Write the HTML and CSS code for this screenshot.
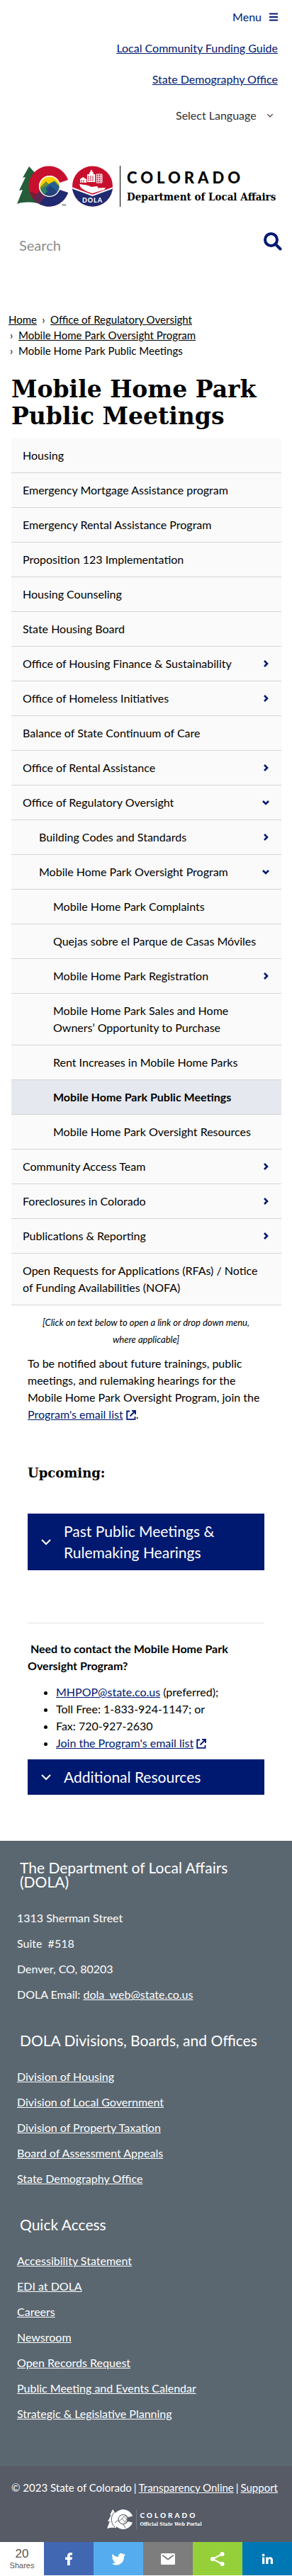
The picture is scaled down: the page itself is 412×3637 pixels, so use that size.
FILE: index.html
```html
<!DOCTYPE html>
<html lang="en">
<head>
<meta charset="utf-8">
<meta name="viewport" content="width=device-width, initial-scale=1">
<title>Mobile Home Park Public Meetings | Department of Local Affairs</title>
<link rel="stylesheet" href="styles.css">
</head>
<body>
<svg class="sprite" aria-hidden="true">
  <symbol id="chev-right" viewBox="0 0 12 12"><path d="M4 2l4 4-4 4" fill="none" stroke="currentColor" stroke-width="2.6"/></symbol>
  <symbol id="chev-down" viewBox="0 0 12 12"><path d="M2 4l4 4 4-4" fill="none" stroke="currentColor" stroke-width="2.6"/></symbol>
  <symbol id="chev-thin" viewBox="0 0 16 16"><path d="M2 5l6 6 6-6" fill="none" stroke="currentColor" stroke-width="2"/></symbol>
  <symbol id="external" viewBox="0 0 14 14"><path d="M5 1.5H1.2v11.3h11.3V9M8 1h5v5M13 1L5.5 8.500" fill="none" stroke="currentColor" stroke-width="1.800"/></symbol>
</svg>

<header class="header">
  <div class="utility">
    <button class="menu-button" type="button">Menu
      <svg width="12" height="12" viewBox="0 0 12 12" aria-hidden="true"><path d="M0 1.500h12M0 6h12M0 10.500h12" stroke="currentColor" stroke-width="2"/></svg>
    </button>
    <a href="#">Local Community Funding Guide</a>
    <a href="#">State Demography Office</a>
    <div class="language">
      <select aria-label="Select Language"><option>Select Language</option></select>
      <svg width="10" height="10" aria-hidden="true"><use href="#chev-thin"/></svg>
    </div>
  </div>

  <a class="brand" href="#" aria-label="Colorado Department of Local Affairs">
    <svg class="brand-mark" width="136" height="58" viewBox="0 0 136 58" aria-hidden="true">
      <defs>
        <clipPath id="ring"><path d="M72 20A28.500 28.500 0 1 0 72 38L60 34A15 15 0 1 1 60 24Z"/></clipPath>
        <clipPath id="sun"><circle cx="46" cy="29" r="13.500"/></clipPath>
        <clipPath id="seal"><circle cx="106.500" cy="29" r="28.500"/></clipPath>
      </defs>
      <path d="M17 1L8 17l4-1L3 35l5-1L0 54c8-3 18-3 29-1V14z" fill="#245d38"/>
      <g clip-path="url(#ring)">
        <path d="M16 0h60v58H16z" fill="#c8102e"/>
        <path d="M46 29h32v29H18l5-12z" fill="#1f2a70"/>
        <path d="M28 40l8-9 5 12-12 14-12-7z" fill="#5e2751"/>
        <path d="M17 36l12 4-6 7z" fill="#7a1c35"/>
      </g>
      <circle cx="46" cy="29" r="15" fill="#fff"/>
      <g clip-path="url(#sun)">
        <path d="M30 14h32v32H30z" fill="#ffd100"/>
        <path d="M31 32l10-10 5 5 7-6 10 10v15H31z" fill="#6c8f2c"/>
        <path d="M38 32l8-7 6-3 10 10v14H32z" fill="#236192"/>
        <path d="M30 44l9-9 8-7 8 7 8 9v4H30z" fill="#23427f"/>
        <path d="M30 37l9-8 4 7-8 9z" fill="#2e7f66"/>
      </g>
      <text x="63" y="57" class="tm">TM</text>
      <g clip-path="url(#seal)">
        <path d="M78 0h58v58H78z" fill="#c8102e"/>
        <path d="M77 31l29.500 11L136 31v28H77z" fill="#1f2a70"/>
        <path d="M77 31l29.500 11L136 31" fill="none" stroke="#fff" stroke-width="2"/>
      </g>
      <path d="M88 26c8 1 12 1 17 4l7-1c3 0 3 3 0 3h-7c6 0 13-1 20-1l-2 3-17 5c-7-2-12-5-16-8z" fill="#fff"/>
      <path d="M89 19l4-3 5 3v5h-9zM99 12h11v11H99zM102 12a3 4 0 0 1 6 0zM104 6h2v4h-2z" fill="#fff"/>
      <path d="M91 24v-4M94 24v-4M101 14v8M104 14v8M107 14v8" stroke="#c8102e"/>
      <path d="M112 12h8v12h-8zM112 15h8M112 18h8M112 21h8M115 12v12M118 12v12" fill="none" stroke="#fff"/>
      <text x="106.500" y="52" class="seal-text">DOLA</text>
    </svg>
    <span class="brand-text">
      <span class="brand-state">COLORADO</span>
      <span class="brand-dept">Department of Local Affairs</span>
    </span>
  </a>

  <form class="search" role="search">
    <input type="search" placeholder="Search" aria-label="Search">
    <button type="submit" aria-label="Submit search">
      <svg width="26" height="26" viewBox="0 0 26 26" aria-hidden="true"><circle cx="10.500" cy="10.500" r="8.500" fill="none" stroke="currentColor" stroke-width="4"/><path d="M16.500 16.500l7 7" stroke="currentColor" stroke-width="4" stroke-linecap="round"/></svg>
    </button>
  </form>
</header>

<nav class="breadcrumb" aria-label="Breadcrumb">
  <div><a href="#">Home</a><span class="sep">›</span><a href="#">Office of Regulatory Oversight</a></div>
  <div><span class="sep sep-first">›</span><a href="#">Mobile Home Park Oversight Program</a></div>
  <div><span class="sep sep-first">›</span>Mobile Home Park Public Meetings</div>
</nav>

<main>
  <h1>Mobile Home Park Public Meetings</h1>

  <nav class="side-nav" aria-label="Division of Housing">
    <ul>
      <li><a href="#">Housing</a></li>
      <li><a href="#">Emergency Mortgage Assistance program</a></li>
      <li><a href="#">Emergency Rental Assistance Program</a></li>
      <li><a href="#">Proposition 123 Implementation</a></li>
      <li><a href="#">Housing Counseling</a></li>
      <li><a href="#">State Housing Board</a></li>
      <li><a href="#">Office of Housing Finance &amp; Sustainability</a><button type="button" aria-label="Expand"><svg><use href="#chev-right"/></svg></button></li>
      <li><a href="#">Office of Homeless Initiatives</a><button type="button" aria-label="Expand"><svg><use href="#chev-right"/></svg></button></li>
      <li><a href="#">Balance of State Continuum of Care</a></li>
      <li><a href="#">Office of Rental Assistance</a><button type="button" aria-label="Expand"><svg><use href="#chev-right"/></svg></button></li>
      <li><a href="#">Office of Regulatory Oversight</a><button type="button" aria-label="Collapse"><svg><use href="#chev-down"/></svg></button></li>
      <li class="level-2"><a href="#">Building Codes and Standards</a><button type="button" aria-label="Expand"><svg><use href="#chev-right"/></svg></button></li>
      <li class="level-2"><a href="#">Mobile Home Park Oversight Program</a><button type="button" aria-label="Collapse"><svg><use href="#chev-down"/></svg></button></li>
      <li class="level-3"><a href="#">Mobile Home Park Complaints</a></li>
      <li class="level-3"><a href="#" lang="es">Quejas sobre el Parque de Casas Móviles</a></li>
      <li class="level-3"><a href="#">Mobile Home Park Registration</a><button type="button" aria-label="Expand"><svg><use href="#chev-right"/></svg></button></li>
      <li class="level-3"><a href="#">Mobile Home Park Sales and Home<br>Owners’ Opportunity to Purchase</a></li>
      <li class="level-3"><a href="#">Rent Increases in Mobile Home Parks</a></li>
      <li class="level-3 current"><a href="#" aria-current="page">Mobile Home Park Public Meetings</a></li>
      <li class="level-3"><a href="#">Mobile Home Park Oversight Resources</a></li>
      <li><a href="#">Community Access Team</a><button type="button" aria-label="Expand"><svg><use href="#chev-right"/></svg></button></li>
      <li><a href="#">Foreclosures in Colorado</a><button type="button" aria-label="Expand"><svg><use href="#chev-right"/></svg></button></li>
      <li><a href="#">Publications &amp; Reporting</a><button type="button" aria-label="Expand"><svg><use href="#chev-right"/></svg></button></li>
      <li><a href="#">Open Requests for Applications (RFAs) / Notice<br>of Funding Availabilities (NOFA)</a></li>
    </ul>
  </nav>

  <div class="content">
    <p class="hint">[Click on text below to open a link or drop down menu,<br>where applicable]</p>
    <p class="intro">To be notified about future trainings, public<br>meetings, and rulemaking hearings for the<br>Mobile Home Park Oversight Program, join the<br><a href="#">Program's email list</a> <svg class="external"><use href="#external"/></svg>.</p>
    <h2>Upcoming:</h2>
    <button class="accordion" type="button"><svg><use href="#chev-thin"/></svg><span>Past Public Meetings &amp;<br>Rulemaking Hearings</span></button>
    <hr>
    <p class="contact-title">&nbsp;Need to contact the Mobile Home Park<br>Oversight Program?</p>
    <ul class="contact-list">
      <li><a href="#">MHPOP@state.co.us</a> (preferred);</li>
      <li>Toll Free: 1-833-924-1147; or</li>
      <li>Fax: 720-927-2630</li>
      <li><a href="#">Join the Program's email list</a> <svg class="external"><use href="#external"/></svg></li>
    </ul>
    <button class="accordion" type="button"><svg><use href="#chev-thin"/></svg><span>Additional Resources</span></button>
  </div>
</main>

<footer>
  <div class="footer-main">
    <section>
      <h2>The Department of Local Affairs<br>(DOLA)</h2>
      <p>1313 Sherman Street</p>
      <p>Suite &nbsp;#518</p>
      <p>Denver, CO, 80203</p>
      <p>DOLA Email: <a href="#">dola_web@state.co.us</a></p>
    </section>
    <section>
      <h2>DOLA Divisions, Boards, and Offices</h2>
      <p><a href="#">Division of Housing</a></p>
      <p><a href="#">Division of Local Government</a></p>
      <p><a href="#">Division of Property Taxation</a></p>
      <p><a href="#">Board of Assessment Appeals</a></p>
      <p><a href="#">State Demography Office</a></p>
    </section>
    <section>
      <h2>Quick Access</h2>
      <p><a href="#">Accessibility Statement</a></p>
      <p><a href="#">EDI at DOLA</a></p>
      <p><a href="#">Careers</a></p>
      <p><a href="#">Newsroom</a></p>
      <p><a href="#">Open Records Request</a></p>
      <p><a href="#">Public Meeting and Events Calendar</a></p>
      <p><a href="#">Strategic &amp; Legislative Planning</a></p>
    </section>
  </div>
  <div class="footer-bottom">
    <div class="legal"><span>© 2023 State of Colorado</span><span>|</span><a href="#">Transparency Online</a><span>|</span><a href="#">Support</a></div>
    <a class="portal" href="#" aria-label="Colorado Official State Web Portal">
      <svg width="36" height="28" viewBox="0 0 36 28" aria-hidden="true">
        <path d="M8 0L4 8l2-.5L1 17l3-.5L0 27c4-1.500 9-1.500 13-1V6z" fill="#fff"/>
        <path d="M36 9.500A14 14 0 1 0 36 18.500L29.500 17A7 7 0 1 1 29.500 11Z" fill="#fff"/>
        <path d="M14 1a15 15 0 0 0-3 24M11 19l7-6 8 13" fill="none" stroke="#565b66"/>
        <circle cx="22.500" cy="14" r="6.500" fill="#fff" stroke="#565b66"/>
        <path d="M16 18l5-5 4 5 3-4M21 13l3-3 5 5" fill="none" stroke="#565b66" stroke-width=".8"/>
      </svg>
      <span class="portal-text"><span class="portal-state">COLORADO</span><span class="portal-name">Official State Web Portal</span></span>
    </a>
  </div>
</footer>

<aside class="share" aria-label="Share this page">
  <div class="share-count"><strong>20</strong><span>Shares</span></div>
  <button type="button" class="facebook" aria-label="Share on Facebook"><svg viewBox="0 0 22 22"><path d="M9 20v-8H6V8.500h3V6.500C9 3.500 10.800 2 13.400 2H16v3.500h-1.800c-1.300 0-1.500.6-1.500 1.500v1.500H16L15.500 12h-2.800v8z" fill="#fff"/></svg></button>
  <button type="button" class="twitter" aria-label="Share on Twitter"><svg viewBox="0 0 24 24"><path d="M23 5.500a9 9 0 0 1-2.500.7 4.300 4.300 0 0 0 1.900-2.400 9 9 0 0 1-2.800 1A4.400 4.400 0 0 0 12 8.900 12.500 12.500 0 0 1 3 4.300a4.400 4.400 0 0 0 1.400 5.900c-.7 0-1.400-.2-2-.5 0 2.200 1.500 4 3.500 4.400-.6.200-1.300.2-2 .1.600 1.700 2.200 3 4.100 3A9 9 0 0 1 1.500 19C13 25.500 21.500 17 20.800 7.800A9 9 0 0 0 23 5.500z" fill="#fff"/></svg></button>
  <button type="button" class="email" aria-label="Share by email"><svg viewBox="0 0 22 22"><rect x="1" y="3" width="20" height="16" rx="1.500" fill="#fff"/><path d="M3 5.500l8 6 8-6" fill="none" stroke="#7d7d7d" stroke-width="1.800"/></svg></button>
  <button type="button" class="sharethis" aria-label="More sharing options"><svg viewBox="0 0 22 22"><path d="M17.500 4L4 11l13.500 7" fill="none" stroke="#fff" stroke-width="2"/><circle cx="17.500" cy="4" r="3" fill="#fff"/><circle cx="4" cy="11" r="3" fill="#fff"/><circle cx="17.500" cy="18" r="3" fill="#fff"/></svg></button>
  <button type="button" class="linkedin" aria-label="Share on LinkedIn"><svg viewBox="0 0 22 22"><path d="M4 8.500h3.200V18H4zM9.200 8.500h3.100v1.300c1.400-2.400 6.700-2.300 6.700 2.600V18h-3.200v-5c0-2.800-3.300-2.600-3.300 0v5H9.200z" fill="#fff"/><circle cx="5.600" cy="5.400" r="1.900" fill="#fff"/></svg></button>
</aside>
</body>
</html>
```
FILE: styles.css
```css
* { box-sizing: border-box; }

body {
  margin: 0;
  background: #fff;
  color: #000;
  font: 16px/24px Lato, "Noto Sans", sans-serif;
}

p, h1, h2, ul { margin: 0; padding: 0; }
button { padding: 0; border: 0; background: none; color: inherit; font: inherit; }
.sprite { display: none; }

.utility {
  display: flex;
  flex-direction: column;
  align-items: flex-end;
  gap: 20px;
  padding: 12px 20px 0;
}
.utility a, .menu-button { color: #001970; }
.menu-button { display: flex; align-items: center; gap: 11px; }
.language { display: flex; align-items: center; gap: 14px; padding: 7px 6px 0 0; color: #333; }
.language select { appearance: none; padding: 0; border: 0; background: none; color: inherit; font: inherit; }

.brand {
  display: flex;
  gap: 9px;
  margin: 59px 0 0 24px;
  color: #000;
  text-decoration: none;
}
.brand-mark { flex: none; }
.brand-text { display: flex; flex-direction: column; padding: 4px 0 0 9px; border-left: 1px solid #000; white-space: nowrap; }
.brand-state { font: 900 22px/26px Lato, sans-serif; letter-spacing: 5px; }
.brand-dept { font: bold 15px/28px "DejaVu Serif Condensed", "DejaVu Serif", serif; }
.tm { font: 4px Lato, sans-serif; }
.seal-text { fill: #fff; font: 900 9px Lato, sans-serif; text-anchor: middle; letter-spacing: 1px; }

.search { display: flex; padding: 34px 14px 0 27px; }
.search input { flex: 1; min-width: 0; height: 40px; padding: 0; border: 0; background: none; font: 20px/24px Lato, sans-serif; }
.search input::placeholder { color: #8d8d8d; opacity: 1; }
.search button { display: flex; padding-top: 2px; color: #001970; }

.breadcrumb { padding: 74px 12px 0; font-size: 15px; line-height: 22px; }
.breadcrumb a { color: #000; }
.sep { display: inline-block; width: 19px; text-align: center; }
.sep-first { width: 14px; text-align: left; padding-left: 2px; }

h1 {
  padding: 25px 16px 0;
  font: bold 33px/38px "DejaVu Serif", serif;
}

.side-nav { margin: 12px 15px 0 16px; }
.side-nav ul { list-style: none; }
.side-nav li {
  display: flex;
  align-items: center;
  padding: 12px 16px;
  border-bottom: 1px solid #d5d5d5;
  background: #fafafa;
}
.side-nav .level-2 { padding-left: 39px; }
.side-nav .level-3 { padding-left: 59px; }
.side-nav .current { background: #e6e8ef; font-weight: bold; }
.side-nav a { flex: 1; color: #000; text-decoration: none; white-space: nowrap; }
.side-nav button { display: flex; color: #001970; }
.side-nav svg { width: 12px; height: 12px; }

.content { padding: 12px 39px 65px; }
.hint { font-size: 13px; font-style: italic; text-align: center; white-space: nowrap; }
.intro { margin-top: 10px; white-space: nowrap; }
.content a { color: #001970; }
.external { width: 14px; height: 14px; color: #001970; vertical-align: -2px; }
.content h2 { margin: 59px 0 45px; font: bold 18px/24px "DejaVu Serif", serif; }
.accordion {
  display: flex;
  align-items: center;
  gap: 17px;
  width: 100%;
  padding: 10px 18px;
  background: #001970;
  color: #fff;
  font-size: 21px;
  line-height: 30px;
  text-align: left;
}
.accordion svg { flex: none; width: 16px; height: 16px; }
hr { margin: 74px 0 24px; border: 0; border-top: 1px solid #e5e5e5; }
.contact-title { font-weight: bold; white-space: nowrap; }
.contact-list { margin: 13px 0 11px; padding-left: 40px; }

footer { color: #fff; }
footer a { color: #fff; }
.footer-main { background: #5b6770; padding: 28px 24px 50px; }
.footer-main h2 { margin-bottom: 29px; padding: 0 4px; font-size: 21px; line-height: 20px; font-weight: normal; }
.footer-main p { margin-bottom: 12px; }
.footer-main section + section { padding-top: 31px; }
.footer-bottom { padding: 18px 20px 18px 16px; background: #565b66; }
.legal { display: flex; justify-content: space-between; font-size: 15px; white-space: nowrap; }
.portal { display: flex; gap: 5px; width: max-content; margin: 19px auto 0; padding-left: 28px; color: #fff; text-decoration: none; }
.portal-text { display: flex; flex-direction: column; padding: 3px 0 0 4px; border-left: 1px solid #777c85; }
.portal-state { font: 900 10px/11px Lato, sans-serif; letter-spacing: 3px; }
.portal-name { font: bold 7px/13px "DejaVu Serif Condensed", "DejaVu Serif", serif; }

.share { display: grid; grid-template-columns: 62px repeat(5, 1fr); height: 47px; margin-bottom: 1px; }
.share-count { display: flex; flex-direction: column; align-items: center; justify-content: center; color: #555; font: 11px/14px "Liberation Sans", sans-serif; }
.share-count strong { font-size: 17px; line-height: 18px; font-weight: normal; }
.share button { display: flex; align-items: center; justify-content: center; }
.share svg { width: 22px; height: 22px; }
.facebook { background: #4267b2; }
.twitter { background: #55acee; }
.email { background: #7d7d7d; }
.sharethis { background: #95d03a; }
.linkedin { background: #0077b5; }
```
